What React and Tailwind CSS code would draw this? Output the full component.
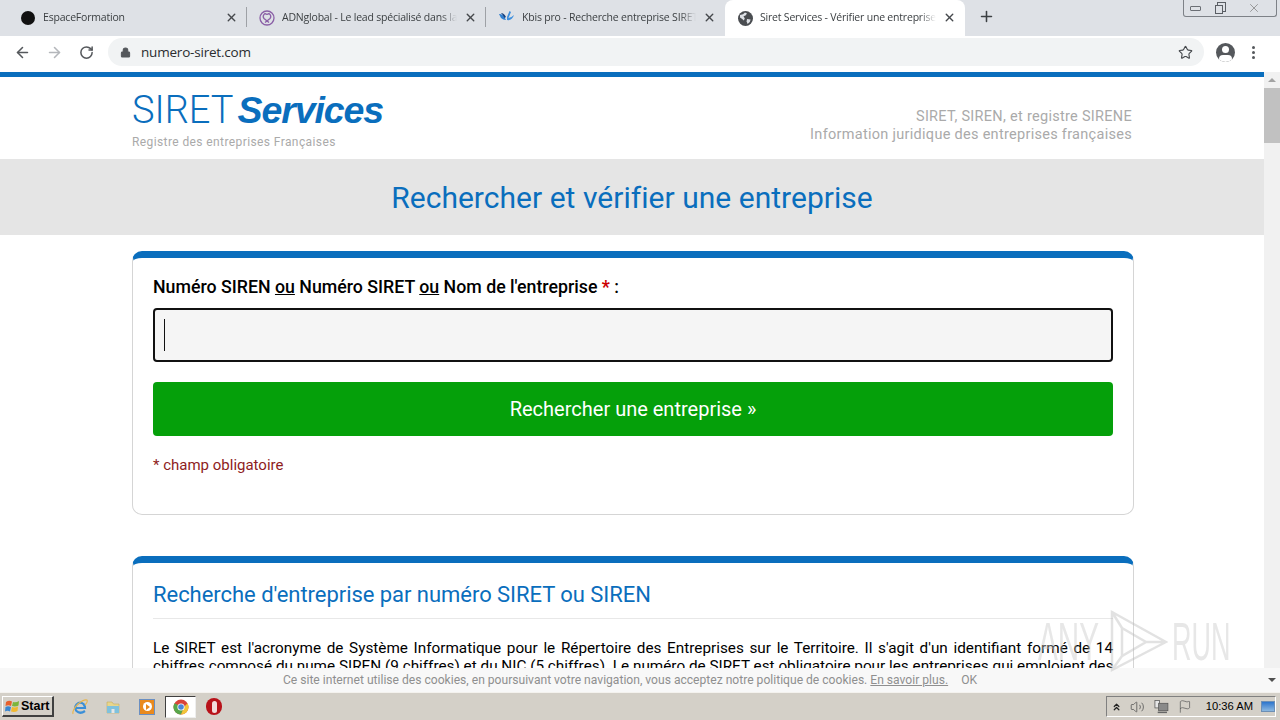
import React from 'react';
import { ArrowLeft, ArrowRight, RotateCw, Lock, Star, X, Plus, ChevronsUp, Volume2, Flag } from 'lucide-react';

const tabs = [
  { title: 'EspaceFormation', icon: 'dot', sep: true },
  { title: 'ADNglobal - Le lead spécialisé dans la', icon: 'adn', sep: true },
  { title: 'Kbis pro - Recherche entreprise SIRET', icon: 'kbis', sep: false },
];

function TabIcon({ kind }) {
  if (kind === 'dot') return <div className="w-[14px] h-[14px] mx-[1px] rounded-full bg-[#111] shrink-0" />;
  if (kind === 'adn') {
    return (
      <svg width="16" height="16" viewBox="0 0 16 16" fill="none" stroke="#8a5fa6" strokeWidth="1.3" className="shrink-0">
        <circle cx="8" cy="8" r="7" />
        <path d="M6 3.5 Q3 6 5 8.5 L10 12.5 M10 3.5 Q13 6 11 8.5 L6 12.5 M6 3.5 Q8 5 10 3.5" />
      </svg>
    );
  }
  return (
    <svg width="17" height="16" viewBox="0 0 17 16" fill="none" className="shrink-0">
      <path d="M1 4 Q5 3 8 10 Q5 10 3 8 Z" fill="#2f7fd0" />
      <path d="M3 3 Q6 3 8 7 L6.5 8 Q5 5 3 3 Z" fill="#16407f" />
      <path d="M9 7 L11.5 1 L13 2 L10.5 8 Q13 8 16 5 Q14 11 9 10 Z" fill="#3f8fdd" />
    </svg>
  );
}

function GlobeFilled() {
  return (
    <svg width="15" height="15" viewBox="0 0 15 15" className="shrink-0">
      <circle cx="7.5" cy="7.5" r="7.5" fill="#4a4d51" />
      <path d="M2 4 L5 3.2 L7 1.6 L9 2.4 L7.5 4.6 L5.5 5.2 L6.8 7.4 L5.8 9.6 L4.2 8 L2 6.4 Z" fill="#dee1e6" />
      <path d="M9 8 L12.6 8.4 L11.8 11 L9.6 13 L8.6 10.6 Z" fill="#dee1e6" />
    </svg>
  );
}

function Tab({ title, icon, sep }) {
  return (
    <div className="w-[239px] h-full flex items-center pl-[12px] pr-[9px] gap-[7px] relative">
      <TabIcon kind={icon} />
      <span className="flex-1 min-w-0 text-[10.5px] tracking-[-0.2px] text-[#3c4043] mb-[1px] [mask-image:linear-gradient(to_left,transparent,black_16px)] whitespace-nowrap overflow-hidden">{title}</span>
      <X size={13} strokeWidth={2.6} className="text-[#45484c] shrink-0 mb-[2px]" />
      {sep && <div className="absolute right-0 top-[7px] w-px h-[20px] bg-[#9ea1a6]" />}
    </div>
  );
}

function BrowserChrome() {
  return (
    <div className="shrink-0 font-['Open_Sans',sans-serif]">
      <div className="h-[36px] bg-[#dee1e6] flex pl-[8px] relative">
        {tabs.map(t => <Tab key={t.title} {...t} />)}
        <div className="w-[240px] h-full bg-white rounded-t-[8px] flex items-center pl-[13px] pr-[9px] gap-[7px]">
          <GlobeFilled />
          <span className="flex-1 min-w-0 text-[10.5px] tracking-[-0.2px] text-[#3c4043] mb-[1px] whitespace-nowrap overflow-hidden [mask-image:linear-gradient(to_left,transparent,black_16px)]">Siret Services - Vérifier une entreprise</span>
          <X size={13} strokeWidth={2.6} className="text-[#45484c] shrink-0 mb-[2px]" />
        </div>
        <Plus size={17} strokeWidth={2.2} className="text-[#3c4043] ml-[13px] mt-[8px]" />
        {/* window buttons */}
        <div className="absolute right-[3px] top-0 w-[94px] h-[17px] flex items-center border border-t-0 border-[#7d8187] rounded-b-[3px]">
          <div className="w-[23px] flex justify-center"><div className="w-[11px] h-[5px] border border-[#6b6f75] rounded-[1px]" /></div>
          <div className="w-[26px] flex justify-center">
            <svg width="13" height="13" viewBox="0 0 13 13" fill="none" stroke="#5a5e64"><rect x="3.5" y="0.5" width="8" height="9" /><rect x="1.5" y="3.5" width="7" height="8" fill="#dee1e6" /></svg>
          </div>
          <div className="flex-1 flex justify-center pr-[2px]"><X size={14} strokeWidth={1.4} className="text-[#888]" /></div>
        </div>
      </div>
      <div className="h-[36px] bg-white flex items-center pl-[14px] pr-[14px] pb-[4px]">
        <ArrowLeft size={17} strokeWidth={2.2} className="text-[#55585c]" />
        <ArrowRight size={17} strokeWidth={2.2} className="text-[#b4b7bb] ml-[15px]" />
        <RotateCw size={15} strokeWidth={2.4} className="text-[#55585c] ml-[16px]" />
        <div className="w-[1096px] h-[28px] ml-[14px] rounded-full bg-[#f1f3f4] flex items-center pl-[12px] pr-[11px]">
          <Lock size={11} fill="#55585c" strokeWidth={2.2} className="text-[#55585c]" />
          <span className="ml-[10px] text-[13.5px] text-[#2a2c2f] tracking-[-0.2px]">numero-siret.com</span>
          <Star size={15} strokeWidth={1.8} className="text-[#45484c] ml-auto" />
        </div>
        <div className="ml-[12px] w-[19px] h-[19px] rounded-full bg-[#55585c] relative overflow-hidden shrink-0">
          <div className="absolute left-[6px] top-[3px] w-[7px] h-[7px] rounded-full bg-white" />
          <div className="absolute left-[3px] top-[12px] w-[13px] h-[8px] rounded-full bg-white" />
        </div>
        <div className="ml-[17px] flex flex-col gap-[2px]">
          <div className="w-[3px] h-[3px] rounded-full bg-[#55585c]" />
          <div className="w-[3px] h-[3px] rounded-full bg-[#55585c]" />
          <div className="w-[3px] h-[3px] rounded-full bg-[#55585c]" />
        </div>
      </div>
    </div>
  );
}

function PageHeader() {
  return (
    <div className="h-[82px] w-[1000px] ml-[132px] flex justify-between">
      <div className="pt-[9px]">
        <div className="flex items-baseline gap-[4px] h-[48px] leading-[48px] text-[#0a6ebd] whitespace-nowrap">
          <span className="text-[38px] font-light">SIRET</span>
          <span className="text-[37.5px] font-['Liberation_Sans',sans-serif] font-bold italic tracking-[-1.1px]">Services</span>
        </div>
        <div className="text-[12px] leading-[16px] text-[#aaaaaa] tracking-[0.4px]">Registre des entreprises Françaises</div>
      </div>
      <div className="pt-[31px] text-right text-[14.5px] leading-[18px] text-[#aaaaaa] tracking-[0.29px]">
        <div>SIRET, SIREN, et registre SIRENE</div>
        <div>Information juridique des entreprises françaises</div>
      </div>
    </div>
  );
}

function SearchCard() {
  return (
    <div className="w-[1002px] h-[264px] ml-[132px] mt-[16px] bg-white border border-[#d5d5d5] border-t-[7px] border-t-[#0a6ebd] rounded-[10px] px-[20px] pt-[17px]">
      <div className="text-[17.75px] leading-[24px] font-medium text-black">
        Numéro SIREN <u>ou</u> Numéro SIRET <u>ou</u> Nom de l'entreprise <span className="text-[#c00] font-bold">*</span> :
      </div>
      <div className="h-[54px] mt-[9px] bg-[#f5f5f5] border-2 border-[#111] rounded-[4px] flex items-center pl-[9px]">
        <div className="w-px h-[32px] bg-[#111]" />
      </div>
      <div className="h-[54px] mt-[20px] bg-[#05a00a] rounded-[4px] flex items-center justify-center text-white text-[20px]">
        Rechercher une entreprise »
      </div>
      <div className="mt-[19px] text-[15px] leading-[20px] text-[#8e1c22]">* champ obligatoire</div>
    </div>
  );
}

function InfoCard() {
  return (
    <div className="w-[1002px] ml-[132px] mt-[41px] bg-white border border-[#d5d5d5] border-t-[7px] border-t-[#0a6ebd] rounded-[10px] px-[20px] pt-[19px] pb-[20px]">
      <h2 className="text-[22px] leading-[26px] text-[#0a6ebd] pb-[10px] border-b border-[#e8e8e8] tracking-[-0.04px]">Recherche d'entreprise par numéro SIRET ou SIREN</h2>
      <div className="mt-[20px] text-[15.3px] leading-[18px] text-black">
        <p className="[text-align-last:justify] whitespace-nowrap">Le SIRET est l'acronyme de Système Informatique pour le Répertoire des Entreprises sur le Territoire. Il s'agit d'un identifiant formé de 14</p>
        <p className="[text-align-last:justify] whitespace-nowrap">chiffres composé du nume SIREN (9 chiffres) et du NIC (5 chiffres). Le numéro de SIRET est obligatoire pour les entreprises qui emploient des</p>
      </div>
    </div>
  );
}

function Scrollbar() {
  return (
    <div className="w-[16px] shrink-0 bg-[#f1f1f1] flex flex-col items-center">
      <div className="h-[16px] flex items-center justify-center">
        <div className="w-0 h-0 border-x-[4px] border-x-transparent border-b-[4px] border-b-[#a3a3a3]" />
      </div>
      <div className="w-full h-[55px] bg-[#c1c1c1]" />
    </div>
  );
}

function Taskbar() {
  return (
    <div className="h-[28px] shrink-0 bg-[#d4d0c8] border-t border-[#f4f2ee] flex items-center font-['Liberation_Sans',sans-serif] relative">
      <div className="ml-[2px] w-[52px] h-[21px] bg-[#d4d0c8] border border-[#fff] border-r-[#404040] border-b-[#404040] border-r-2 border-b-2 flex items-center pl-[2px] gap-[1px]">
        <svg width="15" height="14" viewBox="0 0 15 14" className="shrink-0">
          <path d="M1 3 Q4 1 7 2.5 L6 7 Q3.5 5.5 0.5 7 Z" fill="#e8602c" />
          <path d="M8 3 Q11 4 14 2 L13.5 6.5 Q10.5 8 7 7 Z" fill="#7cb53c" />
          <path d="M0.5 8 Q3 6.5 6 8 L5 12.5 Q2.5 11 0 12.5 Z" fill="#3a86d0" />
          <path d="M7 8 Q10 9 13 7.5 L12.5 12 Q9.5 13.5 6 12.5 Z" fill="#f1b82f" />
        </svg>
        <span className="text-[12.5px] font-bold text-black">Start</span>
      </div>
      {/* quick launch */}
      <svg width="18" height="18" viewBox="0 0 18 18" fill="none" className="ml-[17px]">
        <path d="M14 13 Q9 16.5 5.5 13 Q3 10 5.5 6.5 Q9 3 12.5 6 Q14 8 14 10 H5" stroke="#3a8fd8" strokeWidth="2.2" />
        <path d="M2 16 Q1 12 7 6 Q13 1 16 2 Q17 4 14 7" stroke="#e9b54a" strokeWidth="1.1" />
      </svg>
      <svg width="16" height="16" viewBox="0 0 16 16" className="ml-[16px]">
        <path d="M2 3 H7 L8.5 5 H14 V14 H2 Z" fill="#e8d68c" stroke="#c4ab5e" strokeWidth="0.6" />
        <rect x="2" y="7" width="12" height="7" fill="#7fc1dd" />
        <rect x="6.5" y="10" width="3" height="4" fill="#e6e6e6" />
      </svg>
      <div className="ml-[18px] w-[16px] h-[16px] bg-[#e98a1e] border border-[#6a8fc2] flex items-center justify-center">
        <div className="w-[9px] h-[9px] rounded-full bg-white flex items-center justify-center">
          <div className="w-0 h-0 border-y-[3px] border-y-transparent border-l-[4px] border-l-[#e98a1e] ml-[1px]" />
        </div>
      </div>
      <div className="ml-[10px] w-[31px] h-[22px] bg-white border border-[#404040] border-r-[#eee] border-b-[#eee] flex items-center justify-center">
        <svg width="16" height="16" viewBox="0 0 16 16">
          <circle cx="8" cy="8" r="7.5" fill="#d9443a" />
          <path d="M1.5 4.2 A7.5 7.5 0 0 0 8 15.5 L11 9 Z" fill="#57a64a" />
          <path d="M14.5 4.2 A7.5 7.5 0 0 1 8 15.5 L11 8 Z" fill="#f2c53a" />
          <circle cx="8" cy="8" r="3.6" fill="#fff" />
          <circle cx="8" cy="8" r="2.8" fill="#4a86d8" />
        </svg>
      </div>
      <div className="ml-[10px] w-[16px] h-[17px] rounded-full bg-[#b8121a] flex items-center justify-center">
        <div className="w-[5px] h-[12px] rounded-full bg-[#f3dcdc]" />
      </div>
      {/* tray */}
      <div className="ml-auto mr-[4px] w-[170px] h-[21px] border border-[#808080] border-r-[#fff] border-b-[#fff] flex items-center pl-[4px]">
        <ChevronsUp size={12} strokeWidth={2.6} className="text-[#222]" />
        <Volume2 size={16} strokeWidth={1.3} className="text-[#555] ml-[8px]" />
        <svg width="16" height="16" viewBox="0 0 16 16" className="ml-[9px]">
          <rect x="1" y="1" width="5" height="8" fill="#e6e6e6" stroke="#555" strokeWidth="0.8" />
          <rect x="5" y="4" width="10" height="8" fill="#8a8a8a" stroke="#555" strokeWidth="0.8" />
          <rect x="4" y="13" width="10" height="1.6" fill="#666" />
        </svg>
        <Flag size={15} strokeWidth={1.2} className="text-[#555] ml-[9px]" />
        <span className="ml-[14px] text-[11.2px] text-black whitespace-nowrap">10:36 AM</span>
        <div className="ml-[8px] w-[15px] h-[11px] bg-gradient-to-b from-[#2a74cc] to-[#8cb8e0] border border-[#6d8fb5]" />
      </div>
    </div>
  );
}

export default function App() {
  return (
    <div className="w-[1280px] h-[720px] overflow-hidden flex flex-col relative bg-white font-['Roboto',sans-serif]">
      <BrowserChrome />
      <div className="flex-1 flex min-h-0">
        <div className="flex-1 min-w-0 overflow-hidden border-t-[5px] border-[#0a6ebd]">
          <PageHeader />
          <div className="h-[76px] bg-[#e5e5e5] flex items-center justify-center text-[30px] tracking-[0.03px] text-[#0a6ebd]">Rechercher et vérifier une entreprise</div>
          <SearchCard />
          <InfoCard />
        </div>
        <Scrollbar />
      </div>
      <Taskbar />

      {/* cookie bar */}
      <div className="absolute left-0 bottom-[28px] w-[1280px] h-[24px] bg-[#f8f8f8] flex items-center justify-center text-[12.1px] text-[#8f8f8f] pr-[20px] pointer-events-none">
        Ce site internet utilise des cookies, en poursuivant votre navigation, vous acceptez notre politique de cookies.&nbsp;<u>En savoir plus.</u>
        <span className="ml-[13px]">OK</span>
      </div>

      {/* scrollbar bottom arrow */}
      <div className="absolute right-[4px] bottom-[38px] w-0 h-0 border-x-[4px] border-x-transparent border-t-[4px] border-t-[#505050]" />

      {/* ANY.RUN watermark */}
      <div className="absolute left-[1038px] top-[608px] w-[200px] h-[66px] opacity-40 pointer-events-none text-[#c4c4c4] font-['Liberation_Sans',sans-serif]">
        <span className="absolute left-0 top-[6px] text-[54px] leading-[54px] origin-left scale-x-[0.55]">ANY</span>
        <svg width="64" height="66" viewBox="0 0 64 66" fill="none" stroke="#b8b8b8" strokeWidth="2.5" className="absolute left-[66px] top-0">
          <path d="M8 4 L62 34 L8 62 Z M18 20 L42 34 L18 48 Z M8 4 L18 20 M8 62 L18 48 M62 34 L42 34" />
        </svg>
        <span className="absolute left-[134px] top-[6px] text-[54px] leading-[54px] origin-left scale-x-[0.5]">RUN</span>
      </div>
    </div>
  );
}
